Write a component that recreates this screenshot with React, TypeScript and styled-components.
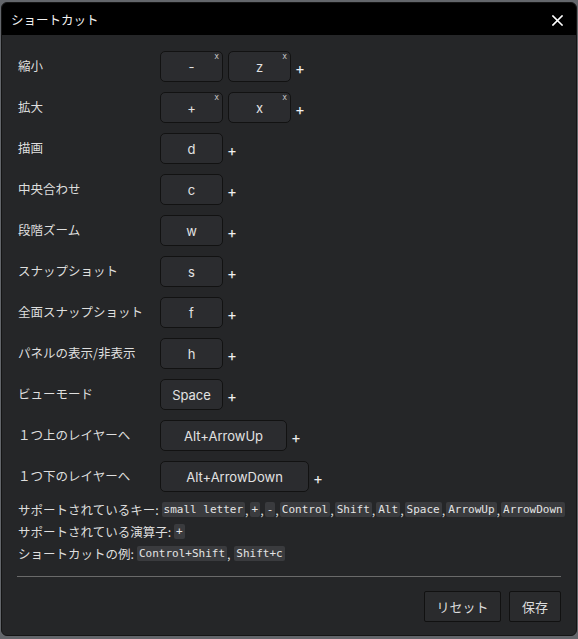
import React from "react";
import styled, { createGlobalStyle } from "styled-components";

const GlobalStyle = createGlobalStyle`
  html, body {
    margin: 0;
    padding: 0;
    background: #63666b;
  }
  body {
    font-family: Inter, "Noto Sans CJK JP", sans-serif;
    color: #dcdcdc;
  }
  * { box-sizing: border-box; }
`;

const Dialog = styled.div`
  margin: 2px 1px 3px 1px;
  height: 634px;
  border: 1px solid #151515;
  border-radius: 6px;
  overflow: hidden;
  background: #252628;
  display: flex;
  flex-direction: column;
`;

const Header = styled.div`
  height: 32px;
  flex: none;
  background: #000;
  display: flex;
  align-items: center;
  justify-content: space-between;
  padding: 0 12px 0 9px;
`;

const Title = styled.span`
  font-family: "Noto Sans CJK JP", sans-serif;
  font-size: 12.5px;
  color: #f2f2f2;
`;

const CloseButton = styled.button`
  background: none;
  border: none;
  padding: 0;
  width: 14px;
  height: 14px;
  margin-top: 2px;
  display: flex;
  align-items: center;
  justify-content: center;
  cursor: pointer;
`;

const Body = styled.div`
  flex: 1;
  padding: 16px 15px 0 15px;
  display: flex;
  flex-direction: column;
`;

const RowList = styled.div`
  display: flex;
  flex-direction: column;
  gap: 10px;
`;

const Row = styled.div`
  display: flex;
  align-items: center;
  height: 31px;
`;

const Label = styled.div`
  width: 143px;
  flex: none;
  padding-left: 1px;
  margin-top: -3px;
  font-family: "Noto Sans CJK JP", sans-serif;
  font-size: 12.5px;
  color: #dedede;
`;

const Keys = styled.div`
  display: flex;
  gap: 5px;
`;

const Key = styled.div<{ $width: number }>`
  position: relative;
  width: ${(p) => p.$width}px;
  height: 31px;
  border: 1px solid #121212;
  border-radius: 5px;
  background: #2b2c2f;
  color: #e2e2e2;
  font-size: 13px;
  display: flex;
  align-items: center;
  justify-content: center;
`;

const RemoveMark = styled.span`
  position: absolute;
  top: 0px;
  right: 3px;
  font-family: "DejaVu Sans Mono", monospace;
  font-size: 8px;
  color: #c8c8c8;
`;

const Plus = styled.span`
  margin-left: 4px;
  margin-top: 3px;
  font-size: 15px;
  color: #f0f0f0;
`;

const Info = styled.div`
  margin-top: 6px;
  font-family: "Noto Sans CJK JP", sans-serif;
  font-size: 12.5px;
  color: #dedede;
`;

const InfoLine = styled.div`
  height: 22px;
  display: flex;
  align-items: center;
  padding-left: 1px;
  white-space: nowrap;
`;

const Chip = styled.code<{ $lead?: boolean }>`
  font-family: "DejaVu Sans Mono", monospace;
  font-size: 11px;
  line-height: 15px;
  padding: 0 2px;
  margin-left: ${(p) => (p.$lead ? 3 : 0)}px;
  background: #3a3b3e;
  border-radius: 2px;
  color: #e4e4e4;
`;

const Sep = styled.span`
  padding: 0 1px 0 0;
`;

const Footer = styled.div`
  margin: 12px 0 0;
  border-top: 1px solid #6a6a6a;
  padding-top: 14px;
  display: flex;
  justify-content: flex-end;
  gap: 8px;
`;

const FooterButton = styled.button<{ $width: number }>`
  width: ${(p) => p.$width}px;
  height: 31px;
  border: 1px solid #111;
  border-radius: 2px;
  background: #2a2b2d;
  color: #dcdcdc;
  font-family: "Noto Sans CJK JP", sans-serif;
  font-size: 13px;
  cursor: pointer;
`;

type Shortcut = {
  label: string;
  keys: { text: string; width: number; removable?: boolean }[];
};

const shortcuts: Shortcut[] = [
  { label: "縮小", keys: [{ text: "-", width: 63, removable: true }, { text: "z", width: 63, removable: true }] },
  { label: "拡大", keys: [{ text: "+", width: 63, removable: true }, { text: "x", width: 63, removable: true }] },
  { label: "描画", keys: [{ text: "d", width: 63 }] },
  { label: "中央合わせ", keys: [{ text: "c", width: 63 }] },
  { label: "段階ズーム", keys: [{ text: "w", width: 63 }] },
  { label: "スナップショット", keys: [{ text: "s", width: 63 }] },
  { label: "全面スナップショット", keys: [{ text: "f", width: 63 }] },
  { label: "パネルの表示/非表示", keys: [{ text: "h", width: 63 }] },
  { label: "ビューモード", keys: [{ text: "Space", width: 63 }] },
  { label: "１つ上のレイヤーへ", keys: [{ text: "Alt+ArrowUp", width: 127 }] },
  { label: "１つ下のレイヤーへ", keys: [{ text: "Alt+ArrowDown", width: 149 }] },
];

const supportedKeys = [
  "small letter",
  "+",
  "-",
  "Control",
  "Shift",
  "Alt",
  "Space",
  "ArrowUp",
  "ArrowDown",
];

const CloseIcon = () => (
  <svg width="11" height="11" viewBox="0 0 11 11">
    <path d="M1 1 L10 10 M10 1 L1 10" stroke="#fff" strokeWidth="1.6" strokeLinecap="square" />
  </svg>
);

export default function App() {
  return (
    <>
      <GlobalStyle />
      <Dialog>
        <Header>
          <Title>ショートカット</Title>
          <CloseButton aria-label="close">
            <CloseIcon />
          </CloseButton>
        </Header>
        <Body>
          <RowList>
            {shortcuts.map((s) => (
              <Row key={s.label}>
                <Label>{s.label}</Label>
                <Keys>
                  {s.keys.map((k) => (
                    <Key key={k.text} $width={k.width}>
                      {k.text}
                      {k.removable && <RemoveMark>x</RemoveMark>}
                    </Key>
                  ))}
                </Keys>
                <Plus>+</Plus>
              </Row>
            ))}
          </RowList>
          <Info>
            <InfoLine>
              サポートされているキー:
              {supportedKeys.map((k, i) => (
                <React.Fragment key={k}>
                  {i > 0 && <Sep>,</Sep>}
                  <Chip $lead={i === 0}>{k}</Chip>
                </React.Fragment>
              ))}
            </InfoLine>
            <InfoLine>
              サポートされている演算子:<Chip $lead>+</Chip>
            </InfoLine>
            <InfoLine>
              ショートカットの例:<Chip $lead>Control+Shift</Chip>
              <Sep>,&nbsp;</Sep>
              <Chip>Shift+c</Chip>
            </InfoLine>
          </Info>
          <Footer>
            <FooterButton $width={77}>リセット</FooterButton>
            <FooterButton $width={52}>保存</FooterButton>
          </Footer>
        </Body>
      </Dialog>
    </>
  );
}
